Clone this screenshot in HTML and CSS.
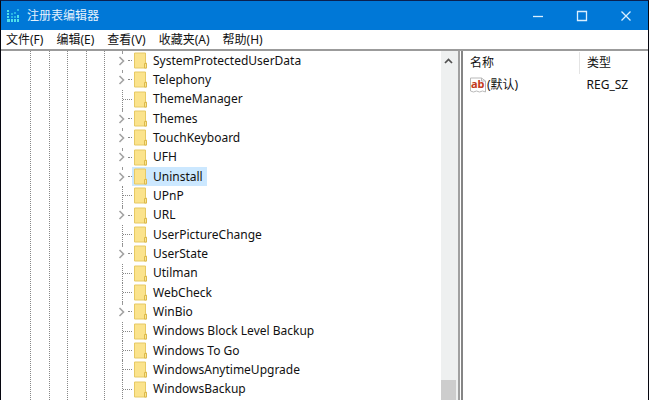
FILE: index.html
```html
<!DOCTYPE html>
<html lang="zh-CN">
<head>
<meta charset="utf-8">
<title>注册表编辑器</title>
<link rel="stylesheet" href="styles.css">
</head>
<body>
<svg width="0" height="0" class="defs" aria-hidden="true">
  <symbol id="folder" viewBox="0 0 14 17">
    <path d="M.5 1h11v10h1v5H.5z" fill="#fbe38c" stroke="#e6c964"/>
    <path d="M10.500 16v-4.500h2v4.500z" fill="#fbe694" stroke="#dcb94c"/>
  </symbol>
  <symbol id="chevron" viewBox="0 0 7 10">
    <path d="M1.500 1l4 4-4 4" fill="none" stroke="#a3a3a3" stroke-width="1.600"/>
  </symbol>
</svg>
<div class="window">
  <header class="titlebar">
    <svg class="app-icon" width="13" height="13" viewBox="0 0 13 13" fill="#4fe0ea">
      <path d="M0 1h2v2H0zM0 4h2v2H0zM0 7h2v2H0zM0 10h3v3H0zM4 10h2v3H4zM7 10h2v3H7zM10 10h2v3h-2zM10 6h2v3h-2z"/>
      <path d="M4 4h2v2H4zM4 7h2v2H4zM7 7h2v2H7zM7 3h2v2H7zM10 0h2v2h-2z" fill="#27b3e5"/>
    </svg>
    <h1>注册表编辑器</h1>
    <div class="controls">
      <button aria-label="最小化"><svg width="12" height="12" viewBox="0 0 12 12"><path d="M1 6.500h10"/></svg></button>
      <button aria-label="最大化"><svg width="12" height="12" viewBox="0 0 12 12"><path d="M1.500 1.500h9v9h-9z"/></svg></button>
      <button aria-label="关闭"><svg width="12" height="12" viewBox="0 0 12 12"><path d="M1.500 1.500l9 9M10.500 1.500l-9 9"/></svg></button>
    </div>
  </header>
  <nav class="menubar">
    <button>文件(F)</button>
    <button>编辑(E)</button>
    <button>查看(V)</button>
    <button>收藏夹(A)</button>
    <button>帮助(H)</button>
  </nav>
  <main class="panes">
    <section class="tree-pane">
      <div class="guides"><i></i><i></i><i></i><i></i><i></i></div>
      <ul class="tree">
        <li><button class="toggle" aria-label="展开"><svg width="7" height="10"><use href="#chevron"/></svg></button><span class="key"><svg width="14" height="17"><use href="#folder"/></svg>SystemProtectedUserData</span></li>
        <li><button class="toggle" aria-label="展开"><svg width="7" height="10"><use href="#chevron"/></svg></button><span class="key"><svg width="14" height="17"><use href="#folder"/></svg>Telephony</span></li>
        <li class="leaf"><span class="key"><svg width="14" height="17"><use href="#folder"/></svg>ThemeManager</span></li>
        <li><button class="toggle" aria-label="展开"><svg width="7" height="10"><use href="#chevron"/></svg></button><span class="key"><svg width="14" height="17"><use href="#folder"/></svg>Themes</span></li>
        <li><button class="toggle" aria-label="展开"><svg width="7" height="10"><use href="#chevron"/></svg></button><span class="key"><svg width="14" height="17"><use href="#folder"/></svg>TouchKeyboard</span></li>
        <li><button class="toggle" aria-label="展开"><svg width="7" height="10"><use href="#chevron"/></svg></button><span class="key"><svg width="14" height="17"><use href="#folder"/></svg>UFH</span></li>
        <li><button class="toggle" aria-label="展开"><svg width="7" height="10"><use href="#chevron"/></svg></button><span class="key selected"><svg width="14" height="17"><use href="#folder"/></svg>Uninstall</span></li>
        <li class="leaf"><span class="key"><svg width="14" height="17"><use href="#folder"/></svg>UPnP</span></li>
        <li><button class="toggle" aria-label="展开"><svg width="7" height="10"><use href="#chevron"/></svg></button><span class="key"><svg width="14" height="17"><use href="#folder"/></svg>URL</span></li>
        <li class="leaf"><span class="key"><svg width="14" height="17"><use href="#folder"/></svg>UserPictureChange</span></li>
        <li><button class="toggle" aria-label="展开"><svg width="7" height="10"><use href="#chevron"/></svg></button><span class="key"><svg width="14" height="17"><use href="#folder"/></svg>UserState</span></li>
        <li class="leaf"><span class="key"><svg width="14" height="17"><use href="#folder"/></svg>Utilman</span></li>
        <li class="leaf"><span class="key"><svg width="14" height="17"><use href="#folder"/></svg>WebCheck</span></li>
        <li><button class="toggle" aria-label="展开"><svg width="7" height="10"><use href="#chevron"/></svg></button><span class="key"><svg width="14" height="17"><use href="#folder"/></svg>WinBio</span></li>
        <li class="leaf"><span class="key"><svg width="14" height="17"><use href="#folder"/></svg>Windows Block Level Backup</span></li>
        <li class="leaf"><span class="key"><svg width="14" height="17"><use href="#folder"/></svg>Windows To Go</span></li>
        <li class="leaf"><span class="key"><svg width="14" height="17"><use href="#folder"/></svg>WindowsAnytimeUpgrade</span></li>
        <li class="leaf"><span class="key"><svg width="14" height="17"><use href="#folder"/></svg>WindowsBackup</span></li>
      </ul>
      <div class="scrollbar">
        <button aria-label="向上滚动"><svg width="9" height="6" viewBox="0 0 9 6"><path d="M1 5l3.500-3.500L8 5" fill="none" stroke="#505050" stroke-width="1.700"/></svg></button>
        <div class="thumb"></div>
      </div>
    </section>
    <section class="values-pane">
      <table>
        <thead><tr><th class="name">名称</th><th>类型</th></tr></thead>
        <tbody><tr>
          <td><span class="value"><svg width="16" height="16" viewBox="0 0 16 16"><path d="M.5 1h11l4 3v11l-3-1-3 1-3-1-3 1-3-1z" fill="#fff" stroke="#b9b9b9"/><path d="M11.500 1v3h4" fill="none" stroke="#b9b9b9"/><text x="1" y="11" class="glyph">ab</text></svg>(默认)</span></td>
          <td>REG_SZ</td>
        </tr></tbody>
      </table>
    </section>
  </main>
</div>
</body>
</html>
```
FILE: styles.css
```css
* { box-sizing: border-box; }
body {
  margin: 0;
  font: 12px/16px "Noto Sans", "Noto Sans CJK SC", sans-serif;
  color: #111;
}
button {
  border: 0;
  padding: 0;
  background: none;
  font: inherit;
  color: inherit;
}
svg { display: block; flex: none; }
.defs { position: absolute; }
.window {
  display: flex;
  flex-direction: column;
  min-height: 100vh;
  border: 1px solid #06060f;
  border-top-color: #0a2050;
  border-bottom: 0;
  background: #fff;
}
.titlebar {
  display: flex;
  align-items: center;
  height: 29px;
  padding-left: 6px;
  background: #0078d7;
  color: #e4f1fc;
}
.titlebar h1 {
  flex: 1;
  margin: 0 0 0 7px;
  font-size: 12px;
  font-weight: 400;
}
.controls { display: flex; }
.controls button {
  display: grid;
  place-items: center;
  width: 44px;
  height: 27px;
}
.controls path { fill: none; stroke: #d9efff; stroke-width: 1.3; }
.menubar {
  display: flex;
  gap: 13px;
  height: 19px;
  padding-left: 5px;
}
.panes {
  flex: 1;
  display: grid;
  grid-template-columns: 462fr 185fr;
  border-top: 2px solid #9b9b9b;
}
.tree-pane {
  display: flex;
  border-right: 2px solid #858585;
}
.guides {
  display: flex;
  justify-content: space-between;
  width: 104px;
  padding-left: 29px;
}
.guides i { border-left: 1px dotted #888; }
.tree {
  flex: 1;
  display: flex;
  flex-direction: column;
  margin: 0 0 1px;
  padding: 0 0 0 13px;
  list-style: none;
}
.tree li {
  flex: 1;
  display: flex;
  align-items: center;
  background: linear-gradient(#999, #999) 4px 0 / 1px 3px no-repeat;
}
.tree li::before {
  content: "";
  order: 1;
  width: 4px;
  margin-left: 3px;
  border-top: 1px dotted #888;
}
.tree .leaf { background: none; }
.tree .leaf::before {
  order: 0;
  align-self: stretch;
  width: 10px;
  margin-left: 4px;
  background: repeating-linear-gradient(to right, #888 0 1px, transparent 1px 2px) 0 50% / 100% 1px no-repeat;
  border-top: 0;
  border-left: 1px dotted #888;
}
.toggle { width: 7px; }
.key {
  order: 2;
  display: flex;
  align-items: center;
  gap: 5px;
  align-self: stretch;
  padding: 0 4px 0 2px;
}
.selected { background: #cce8ff; }
.leaf .key { padding-left: 1px; }
.scrollbar {
  display: flex;
  flex-direction: column;
  justify-content: space-between;
  width: 19px;
  margin-right: 1px;
  padding-right: 2px;
  background: #eef0f0;
  border-right: 2px solid #a0a0a0;
}
.scrollbar button {
  display: grid;
  place-items: center;
  height: 19px;
}
.thumb { height: 20px; background: #cdcdcd; }
.values-pane { padding-top: 1px; }
table {
  width: 100%;
  border-collapse: collapse;
  table-layout: fixed;
  text-align: left;
}
th, td { height: 22px; padding: 0 0 0 7px; font-weight: 400; }
.name { width: 63%; border-right: 1px solid #e4e4e4; }
.value { display: flex; align-items: center; gap: 1px; }
.glyph { font: bold 11px "Noto Sans", sans-serif; fill: #c33a20; }
```
